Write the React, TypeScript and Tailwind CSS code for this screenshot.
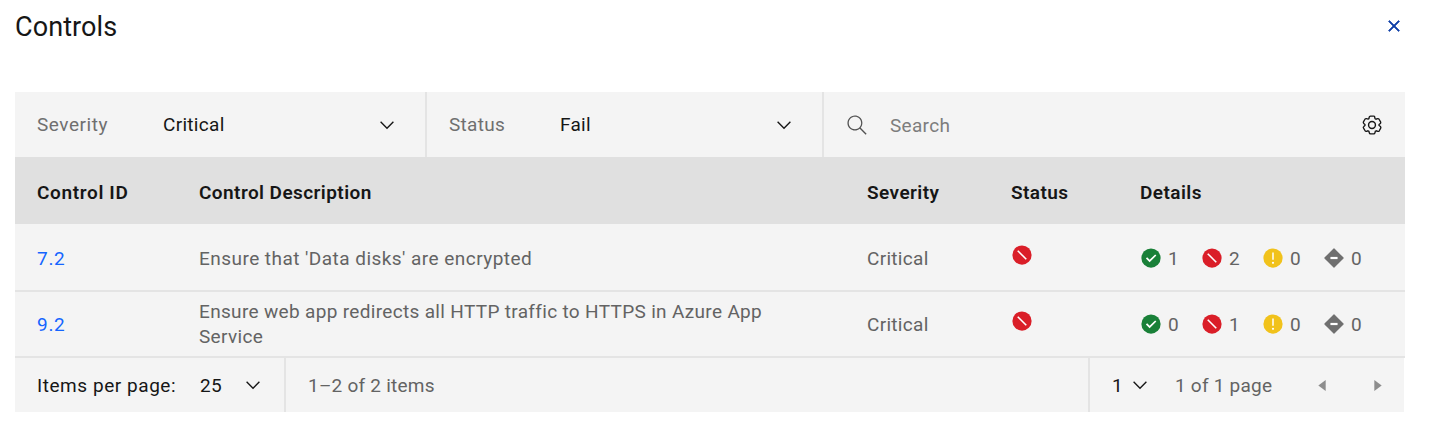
import React from "react";

type IconProps = { className?: string };

const ChevronDown = ({ className = "" }: IconProps) => (
  <svg viewBox="0 0 16 16" className={`size-[22px] shrink-0 fill-[#161616] ${className}`}>
    <polygon points="8 11 3 6 3.7 5.3 8 9.6 12.3 5.3 13 6" />
  </svg>
);

const Close = () => (
  <svg viewBox="0 0 32 32" className="size-[22px] fill-[#0f3fa8]">
    <path d="M24 9.4L22.6 8 16 14.6 9.4 8 8 9.4 14.6 16 8 22.6 9.4 24 16 17.4 22.6 24 24 22.6 17.4 16 24 9.4z" stroke="#0f3fa8" strokeWidth="1" />
  </svg>
);

const SearchIcon = () => (
  <svg viewBox="0 0 16 16" className="size-[22px] shrink-0 fill-[#525252]">
    <path fillRule="evenodd" d="M15 14.3L10.7 10c1.9-2.3 1.6-5.8-.7-7.7S4.2.7 2.3 3 .7 8.8 3 10.7c2 1.7 5 1.7 7 0l4.3 4.3.7-.7zM2 6.5C2 4 4 2 6.5 2S11 4 11 6.5 9 11 6.5 11 2 9 2 6.5z" />
  </svg>
);

const Settings = () => (
  <svg viewBox="0 0 16 16" className="size-[22px] shrink-0 fill-none stroke-[#161616]" strokeWidth="1.05">
    <path
      transform="translate(8 8) scale(.93) translate(-8 -8)"
      d="M13.5 8.4V7.6l1-.8c.4-.3.4-.9.2-1.3l-1.2-2c-.2-.3-.5-.5-.9-.5-.1 0-.2 0-.3.1l-1.2.4c-.2-.1-.4-.3-.7-.4l-.3-1.3c0-.5-.4-.8-.9-.8H6.8c-.5 0-.9.3-1 .8l-.2 1.3c-.3.1-.5.2-.7.3L3.7 3h-.3c-.4 0-.7.2-.9.5l-1.2 2c-.2.4-.1.9.3 1.3l.9.8v.8l-.9.8c-.4.3-.5.9-.2 1.3l1.2 2c.1.3.4.5.8.5.1 0 .2 0 .3-.1l1.2-.4c.2.1.4.3.7.4l.3 1.3c.1.5.5.8 1 .8h2.4c.5 0 .9-.3 1-.8l.3-1.3c.2-.1.4-.2.7-.4l1.2.4c.1 0 .2.1.3.1.4 0 .7-.2.9-.5l1.1-2c.2-.4.2-.9-.2-1.3z"
    />
    <circle cx="8" cy="8" r="2.5" />
  </svg>
);

const Pass = () => (
  <svg viewBox="0 0 16 16" className="size-[22px] shrink-0">
    <circle cx="8" cy="8" r="7" fill="#198038" />
    <path d="M7 11L4.3 8.3l.9-.8L7 9.3l4-3.9.9.8z" fill="#fff" />
  </svg>
);

const Fail = () => (
  <svg viewBox="0 0 16 16" className="size-[22px] shrink-0">
    <circle cx="8" cy="8" r="7" fill="#da1e28" />
    <path d="M4.9 4.9l6.2 6.2" stroke="#fff" strokeWidth="1.15" />
  </svg>
);

const Warning = () => (
  <svg viewBox="0 0 16 16" className="size-[22px] shrink-0">
    <circle cx="8" cy="8" r="7" fill="#f1c21b" />
    <path d="M7.45 4h1.1v5.2h-1.1z" fill="#fff" />
    <circle cx="8" cy="11.5" r=".8" fill="#fff" />
  </svg>
);

const NotApplicable = () => (
  <svg viewBox="0 0 16 16" className="size-[22px] shrink-0">
    <path d="M8 1.4L14.6 8 8 14.6 1.4 8z" fill="#6f6f6f" stroke="#6f6f6f" strokeWidth=".9" strokeLinejoin="round" />
    <path d="M5.4 7.2h5.2v1.6H5.4z" fill="#fff" />
  </svg>
);

const Caret = ({ className = "" }: IconProps) => (
  <svg viewBox="0 0 8 12" className={`h-[11px] w-[8px] shrink-0 fill-[#8d8d8d] ${className}`}>
    <path d="M8 0v12L0 6z" />
  </svg>
);

const COLS = "grid grid-cols-[162px_668px_144px_129px_1fr] items-center pl-[22px]";

const rows = [
  {
    id: "7.2",
    description: "Ensure that 'Data disks' are encrypted",
    severity: "Critical",
    counts: [1, 2, 0, 0],
    rowClass: "h-[68px] pt-[2px]",
    textClass: "tracking-[0.46px]",
    statusClass: "pb-[6px]",
  },
  {
    id: "9.2",
    description: "Ensure web app redirects all HTTP traffic to HTTPS in Azure App Service",
    severity: "Critical",
    counts: [0, 1, 0, 0],
    rowClass: "h-[66px]",
    textClass: "tracking-[0.33px]",
    statusClass: "pb-[6px]",
  },
];

const countIcons = [Pass, Fail, Warning, NotApplicable];

export default function App() {
  return (
    <main className="h-[436px] w-[1430px] overflow-hidden bg-white pl-[15px] font-['Roboto',sans-serif] text-[19px] leading-[25px] tracking-[0.3px] text-[#161616]">
      <header className="flex h-[92px] items-start justify-between pr-[25px]">
        <h1 className="pt-[10px] text-[27px] leading-[34px] font-normal tracking-[0.1px]">Controls</h1>
        <button aria-label="Close" className="mt-[15px]">
          <Close />
        </button>
      </header>

      <section className="w-[1390px]">
        <div className="flex h-[65px] bg-[#f4f4f4]">
          <div className="flex w-[412px] items-center border-r-2 border-[#e4e4e4] pl-[22px]">
            <span className="w-[126px] tracking-[0.55px] text-[#6f6f6f]">Severity</span>
            <span>Critical</span>
            <ChevronDown className="mr-[27px] ml-auto" />
          </div>
          <div className="flex w-[397px] items-center border-r-2 border-[#e4e4e4] pl-[22px]">
            <span className="w-[111px] text-[#6f6f6f]">Status</span>
            <span>Fail</span>
            <ChevronDown className="mr-[27px] ml-auto" />
          </div>
          <div className="flex flex-1 items-center pr-[22px] pl-[22px]">
            <SearchIcon />
            <span className="ml-[22px] flex-1 pt-[2px] text-[#7d7d7d]">Search</span>
            <Settings />
          </div>
        </div>

        <div className={`${COLS} h-[67px] bg-[#e0e0e0] pt-[3px] font-semibold tracking-[0.43px]`}>
          <span className="tracking-[0.65px]">Control ID</span>
          <span>Control Description</span>
          <span>Severity</span>
          <span>Status</span>
          <span>Details</span>
        </div>

        {rows.map((row) => (
          <div key={row.id} className={`${COLS} border-b-2 border-[#e4e4e4] bg-[#f4f4f4] text-[#636363] ${row.rowClass}`}>
            <a className="tracking-[0.7px] text-[#1565ff]">{row.id}</a>
            <span className={`pr-[90px] ${row.textClass}`}>{row.description}</span>
            <span>{row.severity}</span>
            <span className={row.statusClass}>
              <Fail />
            </span>
            <div className="flex">
              {row.counts.map((count, i) => {
                const Icon = countIcons[i];
                return (
                  <span key={i} className="flex w-[61px] items-center gap-[6px]">
                    <Icon />
                    {count}
                  </span>
                );
              })}
            </div>
          </div>
        ))}

        <footer className="flex h-[54px] w-[1389px] items-stretch bg-[#f4f4f4] text-[#636363]">
          <div className="flex w-[271px] items-center border-r-2 border-[#e4e4e4] pl-[22px] text-[#161616]">
            <span className="w-[163px] tracking-[0.55px]">Items per page:</span>
            <span>25</span>
            <ChevronDown className="mr-[20px] ml-auto" />
          </div>
          <div className="flex flex-1 items-center pl-[22px] tracking-[0.23px]">1–2 of 2 items</div>
          <div className="flex w-[316px] items-center border-l-2 border-[#e4e4e4] pl-[22px]">
            <span className="w-[17px] text-[#161616]">1</span>
            <ChevronDown />
            <span className="ml-[24px] flex-1 tracking-[0.23px]">1 of 1 page</span>
            <Caret />
            <Caret className="mr-[22px] ml-[48px] rotate-180" />
          </div>
        </footer>
      </section>
    </main>
  );
}
